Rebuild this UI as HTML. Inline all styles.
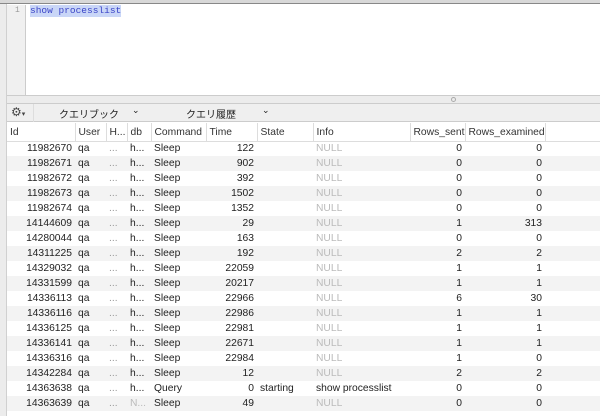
<!DOCTYPE html><html><head><style>
*{margin:0;padding:0;box-sizing:border-box}
body{width:600px;height:416px;overflow:hidden;background:#fff;font-family:"Liberation Sans","Noto Sans CJK JP",sans-serif;font-size:10px;color:#222;position:relative}
.abs{position:absolute}
table{border-collapse:collapse;table-layout:fixed;position:absolute;left:7px;top:123px;width:593px}
td{height:15px;padding:0 3px;white-space:nowrap;overflow:hidden;font-size:10.3px}
tr.h td{height:18px;color:#333;border-right:1px solid #ddd;border-bottom:1px solid #ddd;padding-top:2px}
tr:nth-child(odd):not(.h) td{background:#f3f3f3}
.r{text-align:right}.n{color:#bbb}.g{color:#999}
</style></head><body>
<div class="abs" style="left:0;top:0;width:600px;height:4px;background:#d8d8d8;border-bottom:1px solid #888"></div>
<div class="abs" style="left:0;top:4px;width:7px;height:412px;background:#ececec;border-right:1px solid #d0d0d0"></div>
<div class="abs" style="left:7px;top:5px;width:19px;height:90px;background:#f0f0f0;border-right:1px solid #ccc"></div>
<div class="abs" style="left:15px;top:6px;font-family:'Liberation Mono',monospace;font-size:8px;color:#999">1</div>
<div class="abs" style="left:30px;top:5px;font-family:'Liberation Mono',monospace;font-size:9.5px;color:#3b45c8;background:#c9d6f7;line-height:12px">show processlist</div>
<div class="abs" style="left:7px;top:95px;width:593px;height:9px;background:#ececec;border-top:1px solid #ccc;border-bottom:1px solid #ccc"></div>
<div class="abs" style="left:451px;top:97px;width:5px;height:5px;border-radius:50%;border:1px solid #aaa"></div>
<div class="abs" style="left:7px;top:104px;width:593px;height:18px;background:#efefef;border-bottom:1px solid #ccc"></div>
<div class="abs" style="left:11px;top:105px;font-size:12px;color:#444">⚙<span style="font-size:7px">▾</span></div>
<div class="abs" style="left:33px;top:104px;width:1px;height:18px;background:#ddd"></div>
<div class="abs" style="left:59px;top:106px;font-size:10px">クエリブック</div>
<div class="abs" style="left:132px;top:105px;font-size:9px">⌄</div>
<div class="abs" style="left:186px;top:106px;font-size:10px">クエリ履歴</div>
<div class="abs" style="left:262px;top:105px;font-size:9px">⌄</div>
<table>
<colgroup><col style="width:68px"><col style="width:31px"><col style="width:21px"><col style="width:24px"><col style="width:55px"><col style="width:51px"><col style="width:56px"><col style="width:97px"><col style="width:55px"><col style="width:80px"><col></colgroup>
<tr class="h"><td>Id</td><td>User</td><td>H...</td><td>db</td><td>Command</td><td>Time</td><td>State</td><td>Info</td><td>Rows_sent</td><td>Rows_examined</td><td style="border-right:0"></td></tr>
<tr><td class="r">11982670</td><td>qa</td><td class="g">...</td><td>h...</td><td>Sleep</td><td class="r">122</td><td></td><td class="n">NULL</td><td class="r">0</td><td class="r">0</td><td></td></tr>
<tr><td class="r">11982671</td><td>qa</td><td class="g">...</td><td>h...</td><td>Sleep</td><td class="r">902</td><td></td><td class="n">NULL</td><td class="r">0</td><td class="r">0</td><td></td></tr>
<tr><td class="r">11982672</td><td>qa</td><td class="g">...</td><td>h...</td><td>Sleep</td><td class="r">392</td><td></td><td class="n">NULL</td><td class="r">0</td><td class="r">0</td><td></td></tr>
<tr><td class="r">11982673</td><td>qa</td><td class="g">...</td><td>h...</td><td>Sleep</td><td class="r">1502</td><td></td><td class="n">NULL</td><td class="r">0</td><td class="r">0</td><td></td></tr>
<tr><td class="r">11982674</td><td>qa</td><td class="g">...</td><td>h...</td><td>Sleep</td><td class="r">1352</td><td></td><td class="n">NULL</td><td class="r">0</td><td class="r">0</td><td></td></tr>
<tr><td class="r">14144609</td><td>qa</td><td class="g">...</td><td>h...</td><td>Sleep</td><td class="r">29</td><td></td><td class="n">NULL</td><td class="r">1</td><td class="r">313</td><td></td></tr>
<tr><td class="r">14280044</td><td>qa</td><td class="g">...</td><td>h...</td><td>Sleep</td><td class="r">163</td><td></td><td class="n">NULL</td><td class="r">0</td><td class="r">0</td><td></td></tr>
<tr><td class="r">14311225</td><td>qa</td><td class="g">...</td><td>h...</td><td>Sleep</td><td class="r">192</td><td></td><td class="n">NULL</td><td class="r">2</td><td class="r">2</td><td></td></tr>
<tr><td class="r">14329032</td><td>qa</td><td class="g">...</td><td>h...</td><td>Sleep</td><td class="r">22059</td><td></td><td class="n">NULL</td><td class="r">1</td><td class="r">1</td><td></td></tr>
<tr><td class="r">14331599</td><td>qa</td><td class="g">...</td><td>h...</td><td>Sleep</td><td class="r">20217</td><td></td><td class="n">NULL</td><td class="r">1</td><td class="r">1</td><td></td></tr>
<tr><td class="r">14336113</td><td>qa</td><td class="g">...</td><td>h...</td><td>Sleep</td><td class="r">22966</td><td></td><td class="n">NULL</td><td class="r">6</td><td class="r">30</td><td></td></tr>
<tr><td class="r">14336116</td><td>qa</td><td class="g">...</td><td>h...</td><td>Sleep</td><td class="r">22986</td><td></td><td class="n">NULL</td><td class="r">1</td><td class="r">1</td><td></td></tr>
<tr><td class="r">14336125</td><td>qa</td><td class="g">...</td><td>h...</td><td>Sleep</td><td class="r">22981</td><td></td><td class="n">NULL</td><td class="r">1</td><td class="r">1</td><td></td></tr>
<tr><td class="r">14336141</td><td>qa</td><td class="g">...</td><td>h...</td><td>Sleep</td><td class="r">22671</td><td></td><td class="n">NULL</td><td class="r">1</td><td class="r">1</td><td></td></tr>
<tr><td class="r">14336316</td><td>qa</td><td class="g">...</td><td>h...</td><td>Sleep</td><td class="r">22984</td><td></td><td class="n">NULL</td><td class="r">1</td><td class="r">0</td><td></td></tr>
<tr><td class="r">14342284</td><td>qa</td><td class="g">...</td><td>h...</td><td>Sleep</td><td class="r">12</td><td></td><td class="n">NULL</td><td class="r">2</td><td class="r">2</td><td></td></tr>
<tr><td class="r">14363638</td><td>qa</td><td class="g">...</td><td>h...</td><td>Query</td><td class="r">0</td><td>starting</td><td>show processlist</td><td class="r">0</td><td class="r">0</td><td></td></tr>
<tr><td class="r">14363639</td><td>qa</td><td class="g">...</td><td class="n">N...</td><td>Sleep</td><td class="r">49</td><td></td><td class="n">NULL</td><td class="r">0</td><td class="r">0</td><td></td></tr>
</table>
</body></html>
